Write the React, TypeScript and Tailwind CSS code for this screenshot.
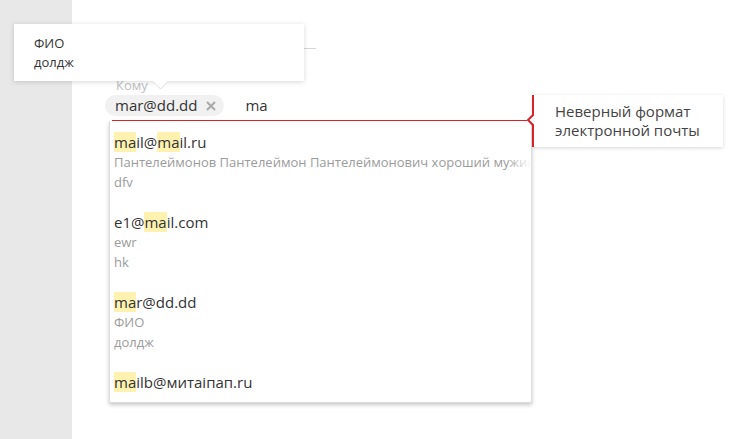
import React from "react";

type Part = { t: string; h?: boolean };
type Item = { email: Part[]; subs: string[] };

const items: Item[] = [
  {
    email: [{ t: "ma", h: true }, { t: "il@" }, { t: "ma", h: true }, { t: "il.ru" }],
    subs: ["Пантелеймонов Пантелеймон Пантелеймонович хороший мужик", "dfv"],
  },
  {
    email: [{ t: "e1@" }, { t: "ma", h: true }, { t: "il.com" }],
    subs: ["ewr", "hk"],
  },
  {
    email: [{ t: "ma", h: true }, { t: "r@dd.dd" }],
    subs: ["ФИО", "долдж"],
  },
  {
    email: [{ t: "ma", h: true }, { t: "ilb@митаiпап.ru" }],
    subs: [],
  },
];

export default function App() {
  return (
    <div className="relative flex h-[439px] w-[750px] overflow-hidden bg-white font-['Open_Sans',sans-serif]">
      <div className="w-[72px] shrink-0 bg-[#e8e8e8]" />
      <div className="relative flex-1 pl-[33px] pt-[77px]">
        {/* faint underline behind popup */}
        <div className="absolute left-[231px] top-[48px] h-px w-[13px] bg-[#d6d6d6]" />
        <div className="flex w-[427px] flex-col">
          <div className="pl-[11px] text-[13px] leading-[16px] text-[#bdbdbd]">Кому</div>
          <div className="mt-[2px] flex h-[21px] items-center">
            <div className="flex h-[21px] items-center gap-[9px] rounded-full bg-[#f1f1f1] pl-[10px] pr-[8px]">
              <span className="text-[15px] leading-[21px] text-[#333]">mar@dd.dd</span>
              <svg width="10" height="10" viewBox="0 0 10 10">
                <path d="M1 1 L9 9 M9 1 L1 9" stroke="#a9a9a9" strokeWidth="2" />
              </svg>
            </div>
            <span className="ml-[21px] text-[15px] leading-[21px] text-[#333]">ma</span>
          </div>
          <div className="relative z-10 ml-[7px] mt-[4px] h-px w-[415px] bg-[#d8232a]" />
        </div>

        {/* dropdown */}
        <div className="absolute left-[37px] top-[121px] w-[423px] border border-t-0 border-[#dcdcdc] bg-white pt-px shadow-[0_2px_4px_rgba(0,0,0,0.22)]">
          {items.map((it, i) => (
            <div key={i} className="py-[10px] pl-[4px]">
              <div className="whitespace-nowrap text-[15px] leading-[20px] text-[#333]">
                {it.email.map((p, j) =>
                  p.h ? (
                    <span key={j} className="inline-block bg-[#fff2b0] leading-[20px]">
                      {p.t}
                    </span>
                  ) : (
                    <span key={j}>{p.t}</span>
                  )
                )}
              </div>
              {it.subs.map((s, k) => (
                <div
                  key={k}
                  className="relative overflow-hidden whitespace-nowrap text-[13px] leading-[20px] text-[#9b9b9b]"
                >
                  {s}
                  <div className="absolute right-0 top-0 h-full w-[24px] bg-gradient-to-r from-transparent to-white" />
                </div>
              ))}
            </div>
          ))}
        </div>

        {/* error tooltip */}
        <div className="absolute left-[461px] top-[95px] z-20 h-[52px] w-[190px] bg-white pl-[22px] pt-[7px] shadow-[0_1px_4px_rgba(0,0,0,0.16)]">
          <svg
            className="absolute left-[-8px] top-0 overflow-visible"
            width="10"
            height="52"
            viewBox="0 0 10 52"
          >
            <path d="M8 20 L3 25 L8 30 Z" fill="white" />
            <path d="M8 0 V20 L3 25 L8 30 V52" stroke="#d8232a" strokeWidth="2" fill="none" />
          </svg>
          <div className="text-[15px] leading-[19px] text-[#444]">
            Неверный формат
            <br />
            электронной почты
          </div>
        </div>
      </div>

      {/* contact popup */}
      <div className="absolute left-[14px] top-[24px] h-[57px] w-[290px] bg-white pl-[20px] pt-[10px] shadow-[0_1px_5px_rgba(0,0,0,0.16)]">
        <div className="text-[13px] leading-[19px] text-[#333]">ФИО</div>
        <div className="text-[13px] leading-[19px] text-[#333]">долдж</div>
        <svg className="absolute left-[138px] top-[57px]" width="17" height="9" viewBox="0 0 17 9">
          <path d="M0 0 L8.5 8.5 L17 0 Z" fill="white" />
          <path d="M0.5 0 L8.5 8 L16.5 0" stroke="#dadada" strokeWidth="1" fill="none" />
        </svg>
      </div>
    </div>
  );
}
